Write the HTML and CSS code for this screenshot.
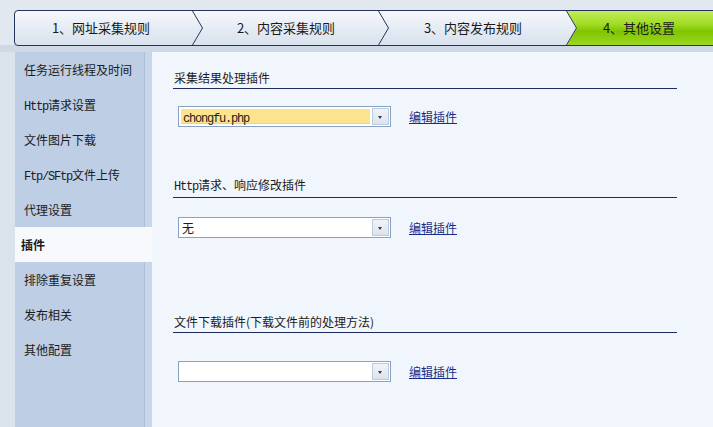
FILE: index.html
```html
<!DOCTYPE html>
<html lang="zh-CN">
<head>
    <meta charset="UTF-8">
    <title>其他设置</title>
    <link rel="stylesheet" href="styles.css">
</head>
<body>
    <div id="wrap">
        <div class="top">
            <div class="steps">
                <div class="step">1、网址采集规则<svg class="chev" width="11" height="34" viewBox="0 0 11 34"><polyline points="0.5,0 10.5,17 0.5,34" fill="none" stroke="#27345a" stroke-width="1"/></svg></div>
                <div class="step s2">2、内容采集规则<svg class="chev" width="11" height="34" viewBox="0 0 11 34"><polyline points="0.5,0 10.5,17 0.5,34" fill="none" stroke="#27345a" stroke-width="1"/></svg></div>
                <div class="step s3">3、内容发布规则<svg class="chev" width="11" height="34" viewBox="0 0 11 34"><polyline points="0.5,0 10.5,17 0.5,34" fill="none" stroke="#27345a" stroke-width="1"/></svg></div>
                <div class="step s4">4、其他设置</div>
            </div>
        </div>
        <div class="main">
            <ul class="nav">
                <li>任务运行线程及时间</li>
                <li><span class="en">Http</span>请求设置</li>
                <li>文件图片下载</li>
                <li><span class="en">Ftp/SFtp</span>文件上传</li>
                <li>代理设置</li>
                <li class="active">插件</li>
                <li>排除重复设置</li>
                <li>发布相关</li>
                <li>其他配置</li>
            </ul>
            <div class="content">
                <div class="group g1">
                    <h3>采集结果处理插件</h3>
                    <div class="row">
                        <div class="select">
                            <div class="value hl"><span class="en">chongfu.php</span></div>
                            <div class="btn"><i></i></div>
                        </div>
                        <a href="#">编辑插件</a>
                    </div>
                </div>
                <div class="group g2">
                    <h3><span class="en">Http</span>请求、响应修改插件</h3>
                    <div class="row">
                        <div class="select">
                            <div class="value">无</div>
                            <div class="btn"><i></i></div>
                        </div>
                        <a href="#">编辑插件</a>
                    </div>
                </div>
                <div class="group g3">
                    <h3>文件下载插件(下载文件前的处理方法)</h3>
                    <div class="row">
                        <div class="select">
                            <div class="value"></div>
                            <div class="btn"><i></i></div>
                        </div>
                        <a href="#">编辑插件</a>
                    </div>
                </div>
            </div>
        </div>
    </div>
</body>
</html>
```
FILE: styles.css
```css
*{margin:0;padding:0;box-sizing:border-box;}
html,body{width:100%;height:100%;}
body{
    font-family:"Noto Sans CJK SC","Liberation Sans",sans-serif;
    font-size:12px;
    color:#1b1b1b;
    background:#dae2ec;
    overflow:hidden;
}
#wrap{width:713px;height:427px;overflow:hidden;}
.en{font-family:"Liberation Mono",monospace;font-size:12px;letter-spacing:-1.2px;}

/* step bar */
.top{
    height:52px;
    padding:10px 0 0 14px;
    background:linear-gradient(#e2e8f0 0,#e2e8f0 45px,#cfd9e5 45px);
    overflow:hidden;
}
.steps{
    display:flex;
    width:740px;
    height:36px;
    border:1px solid #27345a;
    border-radius:4px 0 0 4px;
    background:linear-gradient(#f6f8fb,#e6ecf4 50%,#d8e1ed);
}
.step{
    position:relative;
    width:178px;
    padding-right:6px;
    line-height:34px;
    text-align:center;
    font-size:13px;
    color:#1a1a1a;
}
.step.s2{width:186px;padding-right:0;}
.step.s3{width:188px;padding-right:0;}
.step.s4{
    flex:1;
    padding:0 52px 0 10px;
    background:linear-gradient(#c3ec58,#9fdb22 40%,#80c400 60%,#9bd822);
    clip-path:polygon(0 0,100% 0,100% 100%,0 100%,10px 50%);
}
.chev{position:absolute;top:0;right:-10px;z-index:1;}

/* side nav */
.main{display:flex;height:375px;}
.nav{
    list-style:none;
    width:137px;
    margin-left:15px;
    background:#bdcee5;
    border-right:7px solid #c8d6ea;
    box-shadow:inset -1px 0 0 #aebfd6;
}
.nav li{
    height:35px;
    line-height:35px;
    padding-left:9px;
    white-space:nowrap;
}
.nav li.active{
    margin-right:-7px;
    background:#f7f9fc;
    font-weight:bold;
    padding-left:6px;
}

/* content */
.content{
    flex:1;
    background:#f1f6fc;
    padding-left:21px;
}
.group{width:504px;}
.group h3{
    font-size:12px;
    font-weight:normal;
    line-height:16px;
    padding:0 0 2px 1px;
    border-bottom:1px solid #1f2b5c;
}
.g1{margin-top:18px;}
.g2{margin-top:50px;}
.g3{margin-top:76px;}
.g1 .row{margin-top:17px;}
.g2 .row{margin-top:19px;}
.g3 .row{margin-top:28px;}
.row{
    display:flex;
    align-items:center;
    padding-left:5px;
}
.select{
    display:flex;
    width:213px;
    height:21px;
    border:1px solid #8aa2c0;
    background:#fff;
}
.value{
    flex:1;
    line-height:19px;
    padding-left:3px;
}
.value.hl{
    margin:2px 1px 2px 2px;
    line-height:15px;
    padding-left:2px;
    background:#fce48e;
    border-bottom:1px solid #f3d46a;
}
.btn{
    position:relative;
    width:17px;
    margin:1px;
    border:1px solid #bccbde;
    background:linear-gradient(#f0f4f9,#dbe3ee);
}
.btn i{
    position:absolute;
    left:5px;
    top:7px;
    border-left:2.5px solid transparent;
    border-right:2.5px solid transparent;
    border-top:3px solid #333c4c;
}
.row a{
    margin-left:18px;
    color:#1a2d8a;
    font-size:12px;
    text-decoration:underline;
}
```
